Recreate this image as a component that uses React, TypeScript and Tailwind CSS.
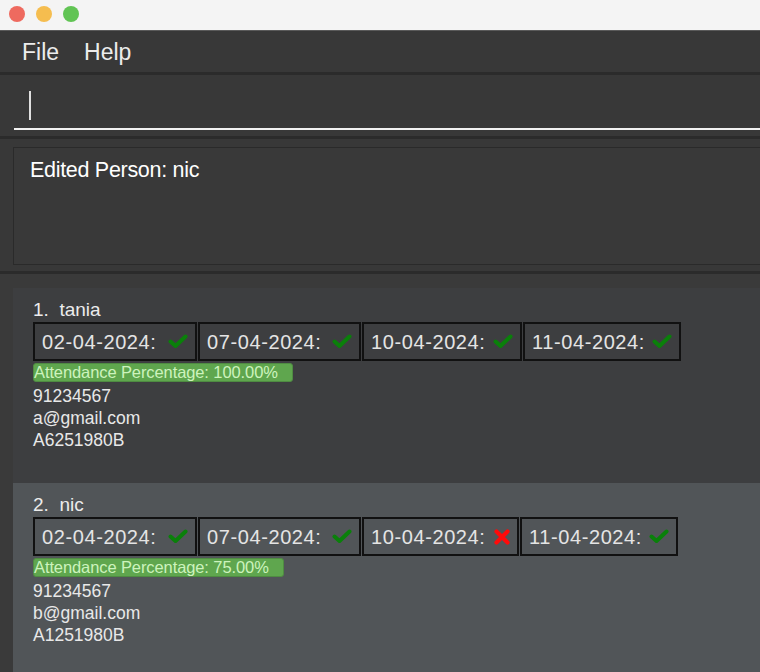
import React from "react";

function Check() {
  return (
    <svg width="20" height="15" viewBox="0 0 20 15" className="shrink-0">
      <path d="M2.5 7.5 L7.5 12 L17.5 2.5" fill="none" stroke="#0a800a" strokeWidth="4" strokeLinecap="round" strokeLinejoin="round" />
    </svg>
  );
}

function Cross() {
  return (
    <svg width="16" height="16" viewBox="0 0 16 16" className="shrink-0">
      <path d="M2.5 2.5 L13.5 13.5 M13.5 2.5 L2.5 13.5" fill="none" stroke="#ff0a0a" strokeWidth="4.2" strokeLinecap="round" />
    </svg>
  );
}

type Att = { date: string; ok: boolean; w: string };

function DateBox({ a }: { a: Att }) {
  return (
    <div className={`${a.w} h-[39px] border-2 border-[#111111] flex items-center justify-between pl-[7px] pr-[7px]`}>
      <span className="text-[20px] leading-none tracking-[0.6px] text-[#e4e4e4]">{a.date}</span>
      {a.ok ? <Check /> : <Cross />}
    </div>
  );
}

function Card({
  idx,
  name,
  atts,
  pct,
  email,
  id,
  bg,
}: {
  idx: number;
  name: string;
  atts: Att[];
  pct: string;
  email: string;
  id: string;
  bg: string;
}) {
  return (
    <div className={`${bg} h-[195px] pl-[20px] pt-[11px] flex flex-col shrink-0`}>
      <div className="text-[19px] leading-[22px] text-[#ececec] whitespace-pre">{`${idx}.  ${name}`}</div>
      <div className="flex gap-[1px] mt-[1px]">
        {atts.map((a) => (
          <DateBox key={a.date} a={a} />
        ))}
      </div>
      <div className="mt-[2px] self-start h-[19px] bg-[#5fa64e] border border-[#4f8c42] rounded-[3px] pr-[14px] flex items-center">
        <span className="text-[16.5px] leading-[17px] text-[#cdf3bd] tracking-[-0.1px]">Attendance Percentage: {pct}</span>
      </div>
      <div className="mt-[3px] flex flex-col text-[17.5px] leading-[22px] text-[#e8e8e8]">
        <div>91234567</div>
        <div>{email}</div>
        <div>{id}</div>
      </div>
    </div>
  );
}

export default function App() {
  const a1: Att[] = [
    { date: "02-04-2024:", ok: true, w: "w-[164px]" },
    { date: "07-04-2024:", ok: true, w: "w-[163px]" },
    { date: "10-04-2024:", ok: true, w: "w-[160px]" },
    { date: "11-04-2024:", ok: true, w: "w-[158px]" },
  ];
  const a2: Att[] = [
    { date: "02-04-2024:", ok: true, w: "w-[164px]" },
    { date: "07-04-2024:", ok: true, w: "w-[163px]" },
    { date: "10-04-2024:", ok: false, w: "w-[157px]" },
    { date: "11-04-2024:", ok: true, w: "w-[158px]" },
  ];
  return (
    <div className="w-[760px] h-[672px] overflow-hidden bg-[#383838] flex flex-col font-['Liberation_Sans',Arial,sans-serif]">
      {/* title bar */}
      <div className="h-[31px] shrink-0 bg-[#f4f4f4] border-b border-[#5a5a5a] flex items-center pl-[9px] gap-[11px] pb-[3px]">
        <div className="w-[16px] h-[16px] rounded-full bg-[#ee6a5f]" />
        <div className="w-[16px] h-[16px] rounded-full bg-[#f5bd4f]" />
        <div className="w-[16px] h-[16px] rounded-full bg-[#61c454]" />
      </div>
      {/* menu bar */}
      <div className="h-[41px] shrink-0 bg-[#383838] flex items-center pl-[22px] gap-[25px] text-[23px] text-[#ececec] pt-[2px]">
        <span>File</span>
        <span>Help</span>
      </div>
      <div className="h-[3px] shrink-0 bg-[#2b2b2b]" />
      {/* command box */}
      <div className="h-[61px] shrink-0 bg-[#383838] pl-[14px]">
        <div className="h-[55px] border-b-2 border-[#f2f2f2] flex items-end pb-[8px] pl-[15px]">
          <div className="w-[1.5px] h-[29px] bg-[#e0e0e0]" />
        </div>
      </div>
      <div className="h-[3px] shrink-0 bg-[#2b2b2b]" />
      {/* result display */}
      <div className="h-[132px] shrink-0 bg-[#383838] pl-[13px] pt-[8px]">
        <div className="h-[118px] -mr-[4px] border border-[#2a2a2a] bg-[#393939] pl-[16px] pt-[10px]">
          <div className="text-[21.5px] leading-[25px] text-white tracking-[-0.3px]">Edited Person: nic</div>
        </div>
      </div>
      <div className="h-[3px] shrink-0 bg-[#2b2b2b]" />
      {/* list */}
      <div className="flex-1 bg-[#3a3a3a] pl-[13px] pt-[14px] flex flex-col">
        <Card
          idx={1}
          name="tania"
          atts={a1}
          pct="100.00%"
          email="a@gmail.com"
          id="A6251980B"
          bg="bg-[#3d3e40]"
        />
        <Card
          idx={2}
          name="nic"
          atts={a2}
          pct="75.00%"
          email="b@gmail.com"
          id="A1251980B"
          bg="bg-[#515558]"
        />
      </div>
    </div>
  );
}
